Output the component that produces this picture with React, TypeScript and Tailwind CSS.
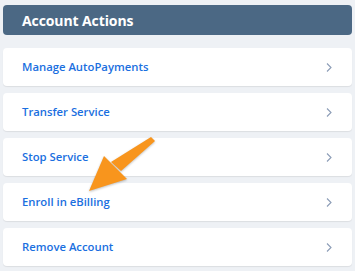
const items = [
  "Manage AutoPayments",
  "Transfer Service",
  "Stop Service",
  "Enroll in eBilling",
  "Remove Account",
];

function Chevron() {
  return (
    <svg width="8" height="11" viewBox="0 0 8 11" fill="none" className="shrink-0">
      <path d="M2 1.5 L6 5.5 L2 9.5" stroke="#8b9cb6" strokeWidth="1.1" />
    </svg>
  );
}

export default function App() {
  return (
    <div
      className="relative h-[271px] w-[355px] overflow-hidden bg-[#eef1f5] px-[3px] pt-[5px]"
      style={{ fontFamily: '"Open Sans", "Noto Sans", sans-serif' }}
    >
      <div className="flex h-[30px] items-center rounded-[4px] bg-[#4b6884] pl-[19px]">
        <h2 className="text-[14px] font-bold tracking-[-0.1px] text-white">Account Actions</h2>
      </div>
      <div className="mt-[13px] flex flex-col gap-[7px]">
        {items.map((label) => (
          <div
            key={label}
            className="flex h-[38px] items-center justify-between rounded-[4px] bg-white pl-[19px] pr-[19px] shadow-[0_1px_1px_rgba(0,0,0,0.08)]"
          >
            <span className="text-[11.3px] font-semibold text-[#1a6fe0]">{label}</span>
            <Chevron />
          </div>
        ))}
      </div>
      {/* orange callout arrow */}
      <svg
        className="pointer-events-none absolute left-0 top-0"
        width="355"
        height="271"
        viewBox="0 0 355 271"
      >
        <g style={{ filter: "drop-shadow(0 1px 1px rgba(0,0,0,0.25))" }}>
          <polygon points="151,137 155,141 121,171 111,162" fill="#f8951d" />
          <polygon points="104,156 127,179 89,191" fill="#f8951d" />
        </g>
      </svg>
    </div>
  );
}
